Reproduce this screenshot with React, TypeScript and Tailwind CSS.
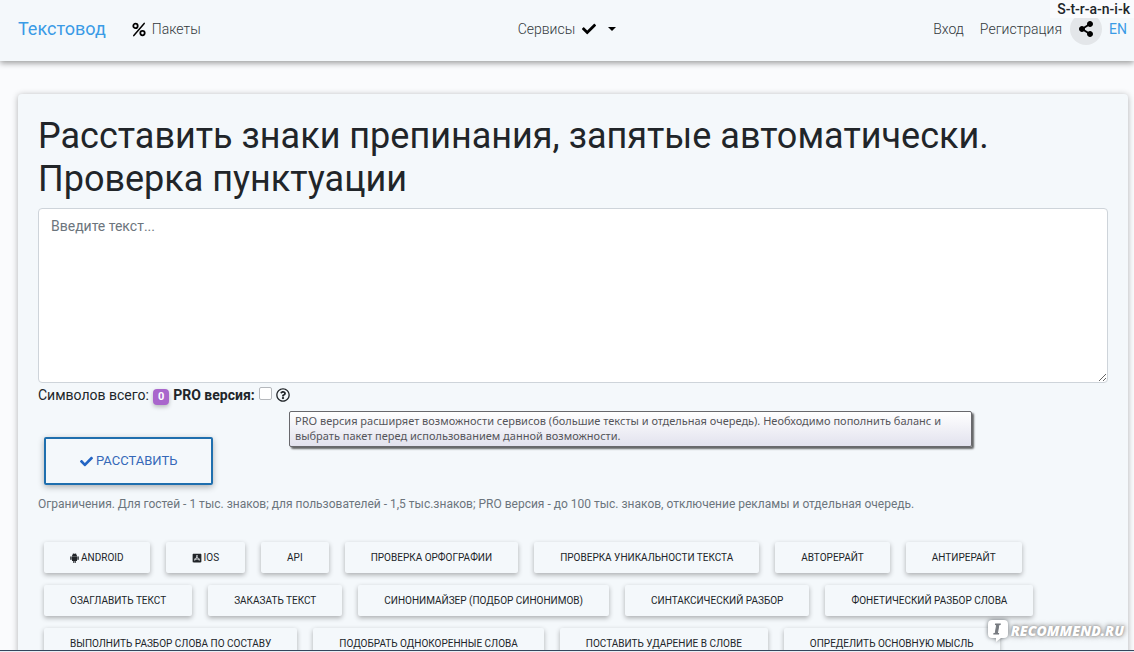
import { useState } from 'react';
import {
	FaAppStoreIos,
	FaCheck,
	FaRegQuestionCircle,
	FaShareAlt,
} from 'react-icons/fa';

const AndroidIcon = () => {
	return (
		<svg width="9" height="10" viewBox="0 0 18 20" fill="currentColor">
			<path d="M4 6.5h10V15q0 1-1 1h-1.5v3q0 1-1 1t-1-1v-3h-1v3q0 1-1 1t-1-1v-3H5q-1 0-1-1z" />
			<path d="M4 5.8Q4.2 3 6.3 1.9L5.5.6l.6-.4.9 1.4q2-.7 4 0l.9-1.4.6.4-.8 1.3Q13.800 3 14 5.800z" />
			<rect x="0.500" y="6.500" width="2.800" height="7.500" rx="1.400" />
			<rect x="14.700" y="6.500" width="2.800" height="7.500" rx="1.400" />
		</svg>
	);
};

const PercentIcon = () => {
	return (
		<svg
			width="14"
			height="15"
			viewBox="0 0 14 15"
			fill="none"
			stroke="#000"
			strokeWidth="1.8"
			strokeLinecap="round"
		>
			<circle cx="3.5" cy="3.9" r="2.2" />
			<circle cx="10.5" cy="11.1" r="2.2" />
			<path d="M12.2 1.4 1.8 13.6" strokeWidth="1.5" />
		</svg>
	);
};

const services = [
	{ name: 'Android', icon: <AndroidIcon /> },
	{ name: 'iOS', icon: <FaAppStoreIos size={10} /> },
	{ name: 'API' },
	{ name: 'Проверка орфографии' },
	{ name: 'Проверка уникальности текста' },
	{ name: 'Авторерайт' },
	{ name: 'Антирерайт' },
	{ name: 'Озаглавить текст' },
	{ name: 'Заказать текст' },
	{ name: 'Синонимайзер (подбор синонимов)' },
	{ name: 'Синтаксический разбор' },
	{ name: 'Фонетический разбор слова' },
	{ name: 'Выполнить разбор слова по составу' },
	{ name: 'Подобрать однокоренные слова' },
	{ name: 'Поставить ударение в слове' },
	{ name: 'Определить основную мысль' },
];

const Navbar = () => {
	return (
		<header className="relative z-10 flex h-[61px] shrink-0 items-center justify-between bg-[#f4f8fb] pr-[7px] pb-[3px] pl-[18px] text-sm font-light text-[#33383d] shadow-[0_2px_6px_rgba(0,0,0,0.4)]">
			<nav className="flex items-center">
				<a href="#" className="text-lg font-normal text-[#3a9be6]">
					Текстовод
				</a>
				<a href="#" className="ml-[26px] flex items-center gap-[6px]">
					<PercentIcon />
					Пакеты
				</a>
			</nav>
			<button type="button" className="flex items-center">
				Сервисы
				<FaCheck size={14} className="ml-[7px] text-black" />
				<span className="ml-3 border-x-4 border-t-4 border-x-transparent border-t-black" />
			</button>
			<nav className="flex items-center">
				<a href="#">Вход</a>
				<a href="#" className="ml-4">
					Регистрация
				</a>
				<button
					type="button"
					aria-label="Share"
					className="ml-2 flex size-8 items-center justify-center rounded-full bg-[#e3e6e9] text-black"
				>
					<FaShareAlt size={16} />
				</button>
				<a href="#" className="ml-[7px] font-normal text-[#3a9be6]">
					EN
				</a>
			</nav>
		</header>
	);
};

const Watermark = () => {
	return (
		<div className="absolute right-[10px] bottom-2 z-20 flex items-center gap-[2px]">
			<svg
				width="22"
				height="26"
				viewBox="0 0 22 26"
				className="drop-shadow-[0_0_2px_rgba(90,95,100,0.9)]"
			>
				<path
					d="M5 2h12q4 0 4 4v10q0 4-4 4h-3l-5 4v-4H5q-4 0-4-4V6q0-4 4-4z"
					fill="#fff"
				/>
				<text
					x="7"
					y="16"
					fontFamily="Liberation Serif, serif"
					fontSize="15"
					fontWeight="700"
					fontStyle="italic"
					fill="#777b80"
					stroke="#777b80"
				>
					I
				</text>
			</svg>
			<span className="font-['Open_Sans',sans-serif] text-sm leading-5 font-extrabold text-white italic [text-shadow:0_0_2px_#999,0_0_4px_#999,0_0_6px_#aaa]">
				RECOMMEND.RU
			</span>
		</div>
	);
};

const App = () => {
	const [text, setText] = useState('');
	const [pro, setPro] = useState(false);

	return (
		<div className="relative flex h-screen flex-col overflow-hidden bg-[#fafbfd] font-[Roboto,sans-serif] text-[#212529]">
			<Navbar />
			<div className="absolute top-0 right-0 z-20 bg-[#fafbfd] pr-1 pl-[7px] text-sm leading-[18px] font-medium">
				S-t-r-a-n-i-k
			</div>

			<main className="min-h-0 flex-1 overflow-hidden pt-[33px] pr-[6px] pl-[18px]">
				<section className="rounded bg-[#f4f8fb] px-5 pt-[21px] pb-10 shadow-[0_1px_6px_rgba(0,0,0,0.3)]">
					<h1 className="text-4xl leading-[43px]">
						Расставить знаки препинания, запятые автоматически. Проверка
						пунктуации
					</h1>
					<textarea
						aria-label="Текст"
						value={text}
						onChange={(e) => setText(e.target.value)}
						placeholder="Введите текст..."
						className="mt-[7px] block h-[175px] w-full rounded border border-[#ced4da] bg-white px-3 py-[6px] text-sm leading-[22px] placeholder:text-[#6c757d]"
					/>

					<div className="relative flex h-6 items-center gap-1 text-sm">
						<span>Символов всего:</span>
						<span className="mt-1 rounded-sm bg-[#a966cc] px-[5px] text-[11px] leading-4 font-bold text-white shadow-[0_2px_4px_rgba(0,0,0,0.25)]">
							{text.length}
						</span>
						<label htmlFor="pro" className="font-bold">
							PRO версия:
						</label>
						<input
							id="pro"
							type="checkbox"
							checked={pro}
							onChange={(e) => setPro(e.target.checked)}
							className="mb-1 size-[13px] appearance-none rounded-xs border border-[#b5b8bc] bg-white checked:bg-[#1976d2]"
						/>
						<FaRegQuestionCircle size={14} />
						<div
							role="tooltip"
							className="absolute top-7 left-[251px] w-[683px] rounded-xs border border-[#68686c] bg-linear-to-b from-white to-[#e2e2ee] px-[5px] pt-px pb-[3px] font-['Noto_Sans',sans-serif] text-[11px] leading-[15px] text-[#55555a] shadow-[2px_2px_2px_rgba(0,0,0,0.6)]"
						>
							PRO версия расширяет возможности сервисов (большие тексты и
							отдельная очередь). Необходимо пополнить баланс и выбрать пакет
							перед использованием данной возможности.
						</div>
					</div>

					<button
						type="button"
						className="mt-[30px] ml-[6px] flex h-12 items-center gap-[3px] rounded-xs border-2 border-[#1f6fae] px-[34px] text-[13px] text-[#3568b8] uppercase shadow-[0_2px_6px_rgba(0,0,0,0.3)]"
					>
						<FaCheck size={13} className="text-[#2264c4]" />
						Расставить
					</button>

					<p className="mt-[10px] text-xs leading-[18px] text-[#6c757d]">
						Ограничения. Для гостей - 1 тыс. знаков; для пользователей - 1,5
						тыс.знаков; PRO версия - до 100 тыс. знаков, отключение рекламы и
						отдельная очередь.
					</p>

					<div className="mt-[29px] flex flex-wrap gap-x-4 gap-y-3 px-[6px]">
						{services.map((service) => (
							<a
								key={service.name}
								href="#"
								className="flex h-[31px] items-center gap-[2px] rounded-xs px-[26px] text-[10px] uppercase shadow-[0_2px_5px_rgba(0,0,0,0.3)]"
							>
								{service.icon}
								{service.name}
							</a>
						))}
					</div>
				</section>
			</main>

			<div className="relative z-10 h-[2px] shrink-0 border-t border-[#34465c] bg-[#e8eef5]" />
			<Watermark />
		</div>
	);
};

export default App;
